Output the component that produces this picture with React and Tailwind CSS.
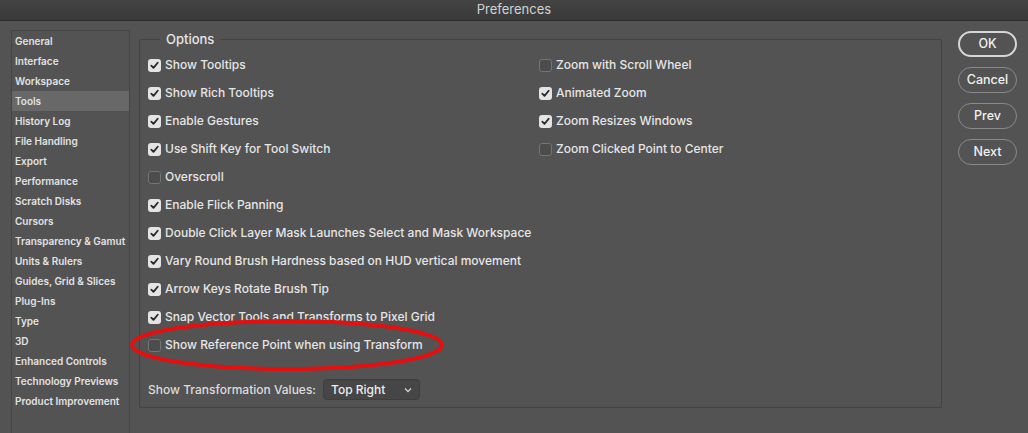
import React from 'react';

const categories = [
  'General',
  'Interface',
  'Workspace',
  'Tools',
  'History Log',
  'File Handling',
  'Export',
  'Performance',
  'Scratch Disks',
  'Cursors',
  'Transparency & Gamut',
  'Units & Rulers',
  'Guides, Grid & Slices',
  'Plug-Ins',
  'Type',
  '3D',
  'Enhanced Controls',
  'Technology Previews',
  'Product Improvement',
];

const leftOptions = [
  { label: 'Show Tooltips', checked: true },
  { label: 'Show Rich Tooltips', checked: true },
  { label: 'Enable Gestures', checked: true },
  { label: 'Use Shift Key for Tool Switch', checked: true },
  { label: 'Overscroll', checked: false },
  { label: 'Enable Flick Panning', checked: true },
  { label: 'Double Click Layer Mask Launches Select and Mask Workspace', checked: true },
  { label: 'Vary Round Brush Hardness based on HUD vertical movement', checked: true },
  { label: 'Arrow Keys Rotate Brush Tip', checked: true },
  { label: 'Snap Vector Tools and Transforms to Pixel Grid', checked: true },
  { label: 'Show Reference Point when using Transform', checked: false },
];

const rightOptions = [
  { label: 'Zoom with Scroll Wheel', checked: false },
  { label: 'Animated Zoom', checked: true },
  { label: 'Zoom Resizes Windows', checked: true },
  { label: 'Zoom Clicked Point to Center', checked: false },
];

function Checkbox({ checked }) {
  if (checked) {
    return (
      <span className="flex h-[13px] w-[13px] shrink-0 items-center justify-center rounded-[3px] bg-[#e4e4e4]">
        <svg width="9" height="9" viewBox="0 0 9 9">
          <path d="M1.3 4.6 L3.5 6.9 L7.7 1.8" fill="none" stroke="#2a2a2a" strokeWidth="1.8" strokeLinecap="round" strokeLinejoin="round" />
        </svg>
      </span>
    );
  }
  return <span className="h-[13px] w-[13px] shrink-0 rounded-[3px] border border-[#747474] bg-[#4c4c4c]" />;
}

function Option({ label, checked }) {
  return (
    <div className="flex h-[28px] items-center">
      <Checkbox checked={checked} />
      <span className="ml-[4px] whitespace-nowrap text-[12px] font-medium text-[#e6e6e6]">{label}</span>
    </div>
  );
}

function PillButton({ children, primary }) {
  return (
    <button
      className={`h-[26px] w-[59px] rounded-full text-[12.5px] font-medium text-[#f0f0f0] ${
        primary ? 'border-2 border-[#d6d6d6]' : 'border border-[#8a8a8a]'
      }`}
    >
      {children}
    </button>
  );
}

export default function App() {
  return (
    <div
      className="h-[433px] w-[1028px] overflow-hidden bg-[#535353]"
      style={{ fontFamily: 'Inter, "Open Sans", sans-serif' }}
    >
      {/* Title bar */}
      <div className="flex h-[21px] items-center justify-center border-b border-[#2b2b2b] bg-gradient-to-b from-[#444444] to-[#393939]">
        <span className="text-[13px] text-[#d2d2d2]">Preferences</span>
      </div>

      <div className="flex">
        {/* Category list */}
        <div className="ml-[11px] mt-[9px] h-[420px] w-[119px] border border-[#454545] bg-[#535353]">
          {categories.map((c) => (
            <div
              key={c}
              className={`flex h-[20px] items-center whitespace-nowrap pl-[3px] text-[10px] font-semibold text-[#e2e2e2] ${
                c === 'Tools' ? 'bg-[#686868]' : ''
              }`}
            >
              {c}
            </div>
          ))}
        </div>

        {/* Options */}
        <fieldset className="relative ml-[9px] mt-[10px] h-[377px] w-[803px] rounded-[2px] border border-[#424242] pl-[8px]">
          <legend className="ml-[12px] px-[6px] text-[13px] leading-[16px] font-medium text-[#e6e6e6]">Options</legend>
          <div className="mt-[4px] flex">
            <div className="w-[391px]">
              {leftOptions.map((o) => (
                <Option key={o.label} {...o} />
              ))}
            </div>
            <div>
              {rightOptions.map((o) => (
                <Option key={o.label} {...o} />
              ))}
            </div>
          </div>

          <div className="mt-[20px] flex items-center">
            <span className="whitespace-nowrap text-[12px] font-medium text-[#dcdcdc]">Show Transformation Values:</span>
            <div className="ml-[7px] flex h-[21px] w-[97px] items-center justify-between rounded-[4px] border border-[#3e3e3e] bg-[#464646] px-[7px]">
              <span className="text-[12px] font-medium text-[#eeeeee]">Top Right</span>
              <svg width="8" height="6" viewBox="0 0 8 6">
                <path d="M1 1.5 L4 4.5 L7 1.5" fill="none" stroke="#d0d0d0" strokeWidth="1.3" />
              </svg>
            </div>
          </div>

          {/* Red highlight */}
          <svg className="pointer-events-none absolute left-[-12px] top-[270px]" width="320" height="56" viewBox="0 0 320 56">
            <ellipse cx="159" cy="28" rx="155" ry="24" fill="none" stroke="#e3100f" strokeWidth="4" />
          </svg>
        </fieldset>

        {/* Buttons */}
        <div className="ml-[16px] mt-[10px] flex flex-col gap-[10px]">
          <PillButton primary>OK</PillButton>
          <PillButton>Cancel</PillButton>
          <PillButton>Prev</PillButton>
          <PillButton>Next</PillButton>
        </div>
      </div>
    </div>
  );
}
